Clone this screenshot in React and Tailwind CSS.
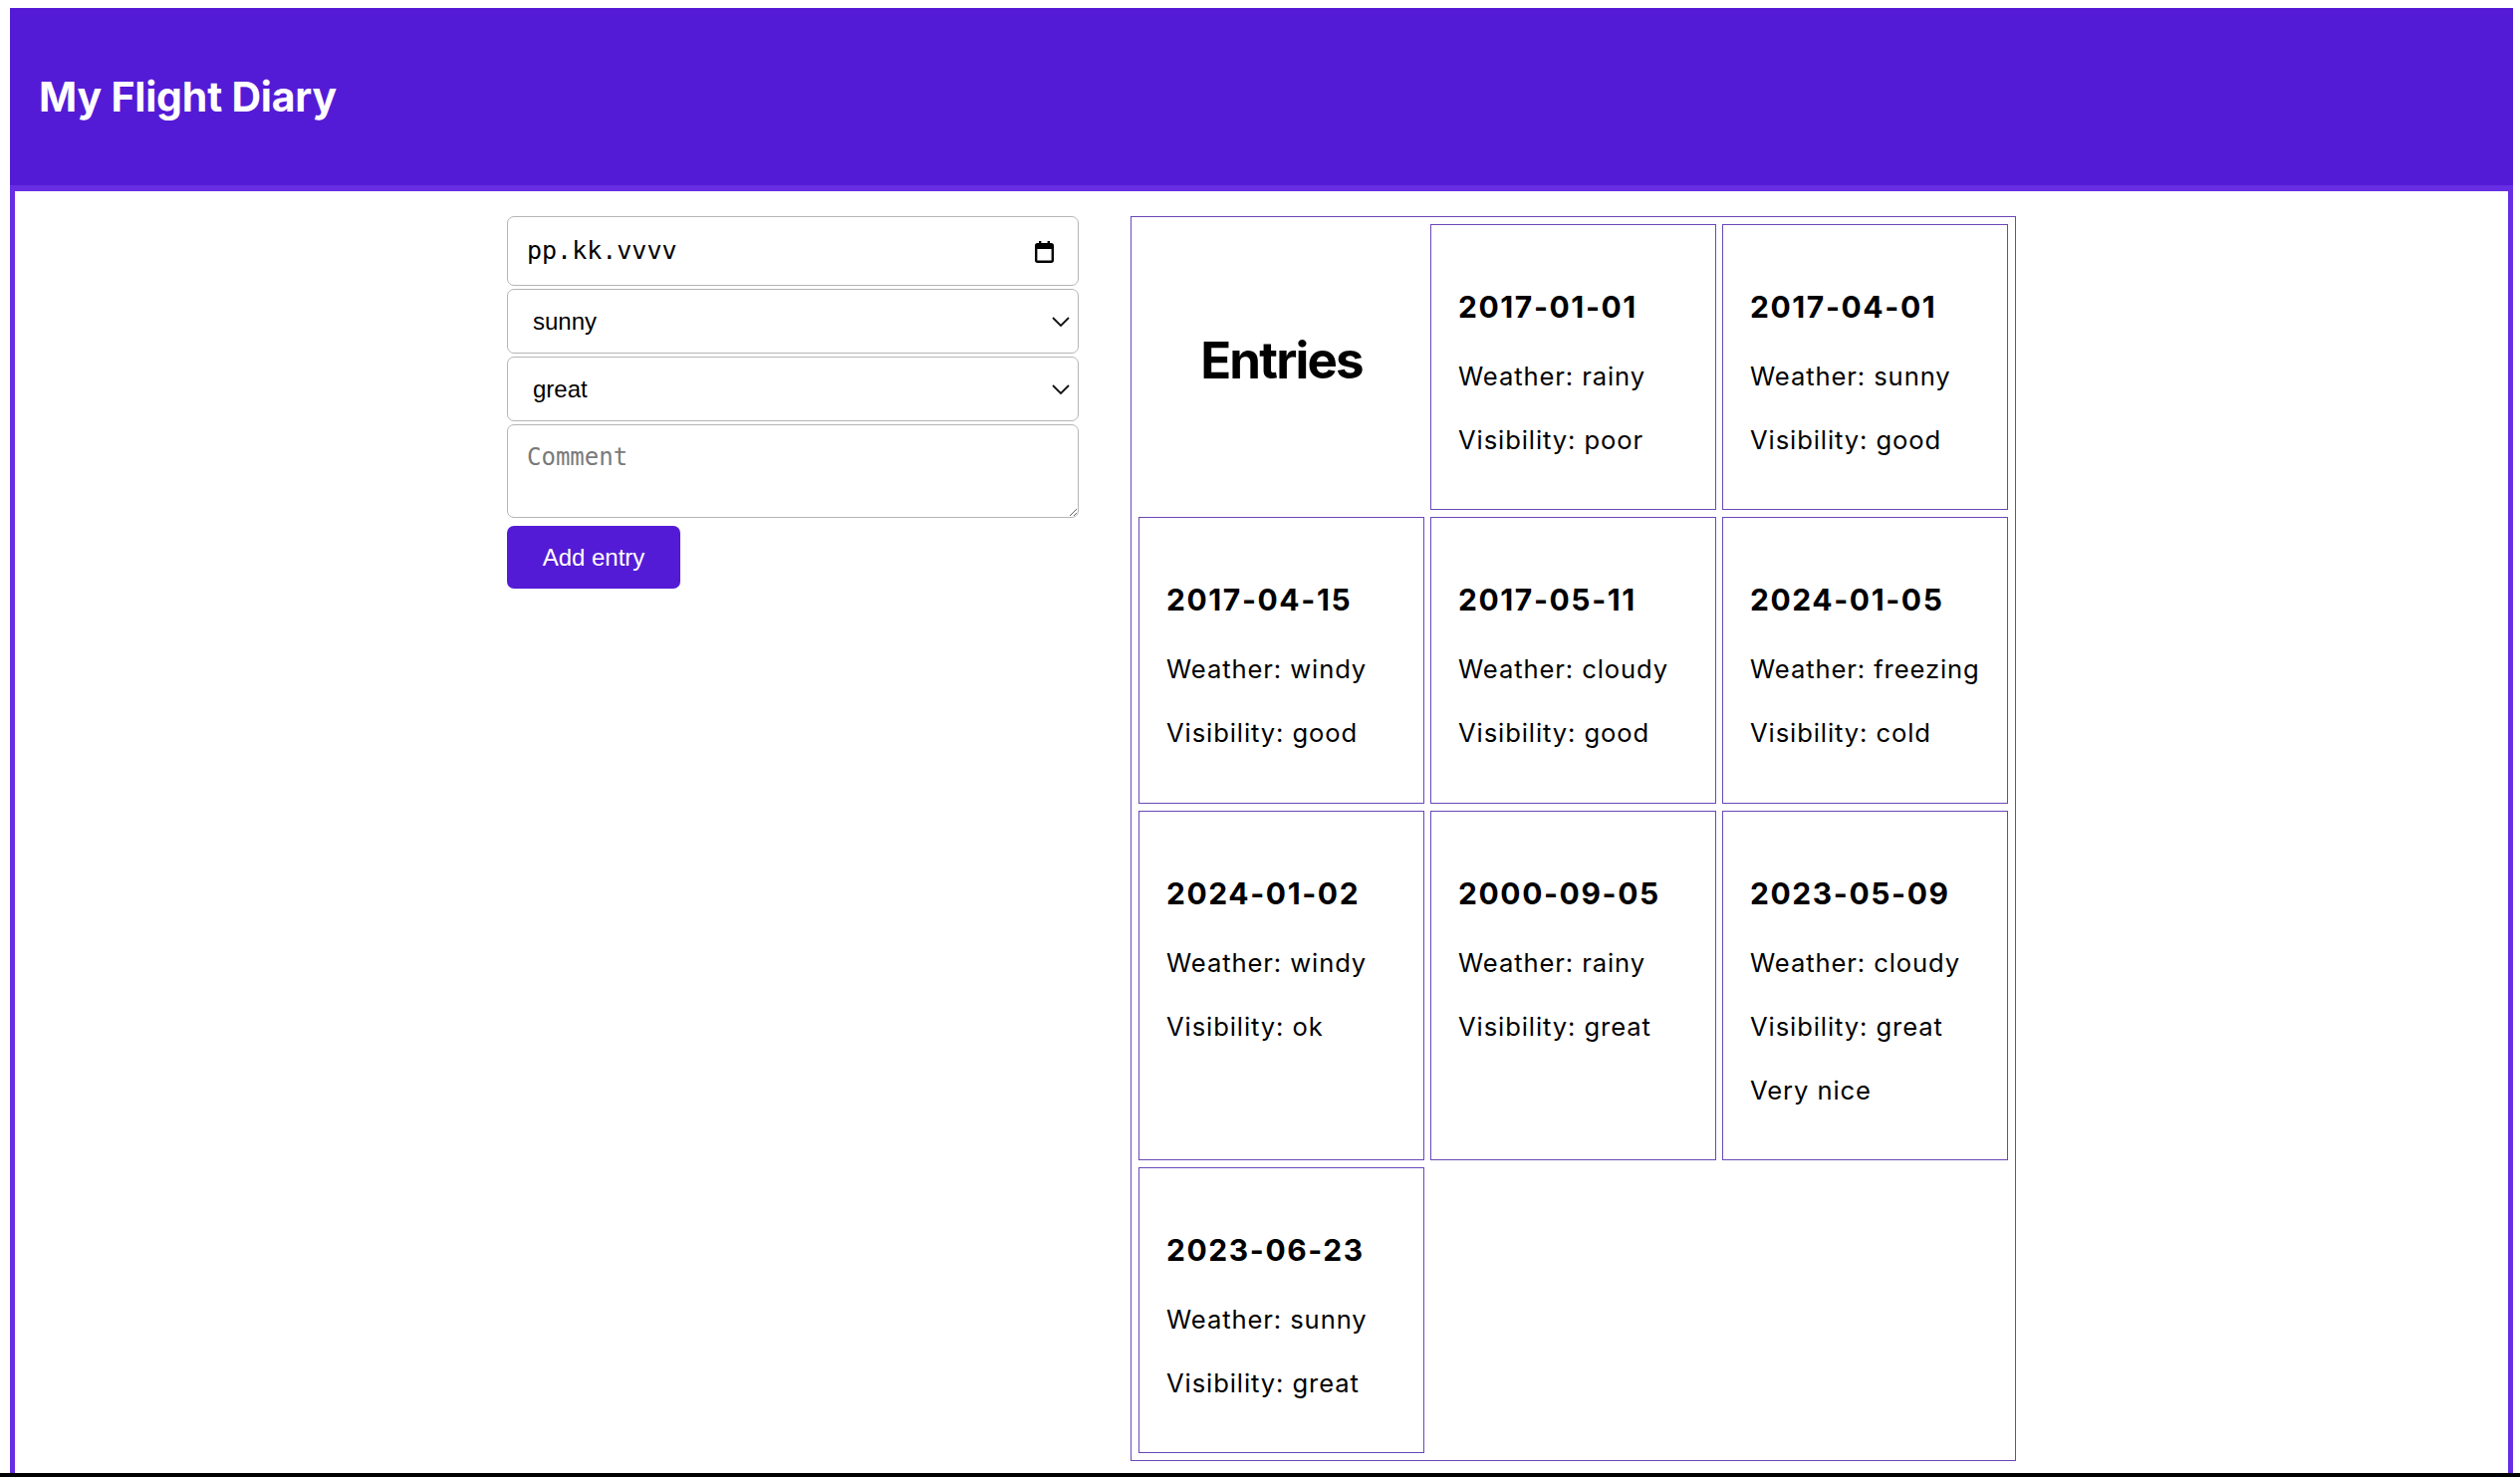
import { useState } from "react";

const entries = [
  { date: "2017-01-01", weather: "rainy", visibility: "poor" },
  { date: "2017-04-01", weather: "sunny", visibility: "good" },
  { date: "2017-04-15", weather: "windy", visibility: "good" },
  { date: "2017-05-11", weather: "cloudy", visibility: "good" },
  { date: "2024-01-05", weather: "freezing", visibility: "cold" },
  { date: "2024-01-02", weather: "windy", visibility: "ok" },
  { date: "2000-09-05", weather: "rainy", visibility: "great" },
  { date: "2023-05-09", weather: "cloudy", visibility: "great", comment: "Very nice" },
  { date: "2023-06-23", weather: "sunny", visibility: "great" },
];

const Chevron = () => (
  <svg width="18" height="10" viewBox="0 0 18 10" className="pointer-events-none shrink-0">
    <path d="M1 1l8 8 8-8" fill="none" stroke="#111" strokeWidth="1.8" />
  </svg>
);

function SelectBox({ value, options, onChange }) {
  return (
    <div className="flex items-center h-[65px] border border-[#b5b5b5] rounded-[7px] bg-white pr-[8px]">
      <select
        value={value}
        onChange={(e) => onChange(e.target.value)}
        className="appearance-none flex-1 h-full bg-transparent pl-[25px] text-[24px] text-black outline-none"
        style={{ fontFamily: "'Liberation Sans', Arial, sans-serif" }}
      >
        {options.map((o) => (
          <option key={o}>{o}</option>
        ))}
      </select>
      <Chevron />
    </div>
  );
}

function EntryCard({ entry }) {
  return (
    <div className="border border-[#6a48b8] pt-[28px] pb-[25px] px-[27px]">
      <h3 className="mt-[32px] mb-[28px] text-[30px] leading-[45px] font-bold tracking-[1.6px]">{entry.date}</h3>
      <div className="flex flex-col gap-[25.6px] text-[25.6px] leading-[1.5] tracking-[0.9px]">
        <p>Weather: {entry.weather}</p>
        <p>Visibility: {entry.visibility}</p>
        {entry.comment && <p>{entry.comment}</p>}
      </div>
      <div className="h-[25px]" />
    </div>
  );
}

export default function App() {
  const [weather, setWeather] = useState("sunny");
  const [visibility, setVisibility] = useState("great");

  return (
    <div
      className="h-[1483px] flex flex-col bg-white overflow-hidden text-black"
      style={{ fontFamily: "Inter, 'Noto Sans', sans-serif" }}
    >
      <div className="h-[8px] shrink-0" />
      <div className="flex-1 flex flex-col ml-[10px] w-[2513px]">
        {/* Header */}
        <header className="h-[178px] shrink-0 bg-[#541bd6] flex items-center pl-[29px]">
          <h1 className="text-[41px] font-bold text-white tracking-[-0.2px] pt-[2px]">My Flight Diary</h1>
        </header>

        {/* Content */}
        <main className="flex-1 border-x-[5px] border-t-[6px] border-[#672ee3] flex justify-center gap-[52px] pt-[25px]">
          {/* Form */}
          <form className="w-[574px] flex flex-col gap-[3px]" onSubmit={(e) => e.preventDefault()}>
            <div className="flex items-center justify-between h-[70px] border border-[#b5b5b5] rounded-[7px] pl-[19px] pr-[24px]">
              <span
                className="text-[25px] text-black"
                style={{ fontFamily: "'DejaVu Sans Mono', monospace" }}
              >
                pp.kk.vvvv
              </span>
              <svg width="19" height="23" viewBox="0 0 19 23">
                <rect x="1.2" y="4.2" width="16.6" height="17.6" rx="1.5" fill="none" stroke="#000" strokeWidth="2.4" />
                <rect x="1" y="4" width="17" height="5" fill="#000" />
                <rect x="4" y="1" width="2.4" height="4" fill="#000" />
                <rect x="12.6" y="1" width="2.4" height="4" fill="#000" />
              </svg>
            </div>
            <SelectBox value={weather} options={["sunny", "rainy", "cloudy", "stormy", "windy"]} onChange={setWeather} />
            <SelectBox value={visibility} options={["great", "good", "ok", "poor"]} onChange={setVisibility} />
            <textarea
              placeholder="Comment"
              className="h-[94px] border border-[#b5b5b5] rounded-[7px] px-[19px] py-[14px] text-[24px] placeholder:text-[#7a7a7a] outline-none"
              style={{ fontFamily: "'DejaVu Sans Mono', monospace" }}
            />
            <button
              type="submit"
              className="mt-[5px] w-[174px] h-[63px] rounded-[7px] bg-[#541bd6] text-white text-[24px]"
              style={{ fontFamily: "'Liberation Sans', Arial, sans-serif" }}
            >
              Add entry
            </button>
          </form>

          {/* Entries */}
          <section className="w-[889px] self-start border border-[#6a48b8] p-[7px] grid grid-cols-3 gap-x-[6px] gap-y-[7px]">
            <div className="flex items-center justify-center pb-[13px]">
              <h1 className="text-[51px] font-bold tracking-[-1.8px]">Entries</h1>
            </div>
            {entries.map((entry) => (
              <EntryCard key={entry.date} entry={entry} />
            ))}
          </section>
        </main>
      </div>
      <div className="h-[4px] shrink-0 bg-black" />
    </div>
  );
}
